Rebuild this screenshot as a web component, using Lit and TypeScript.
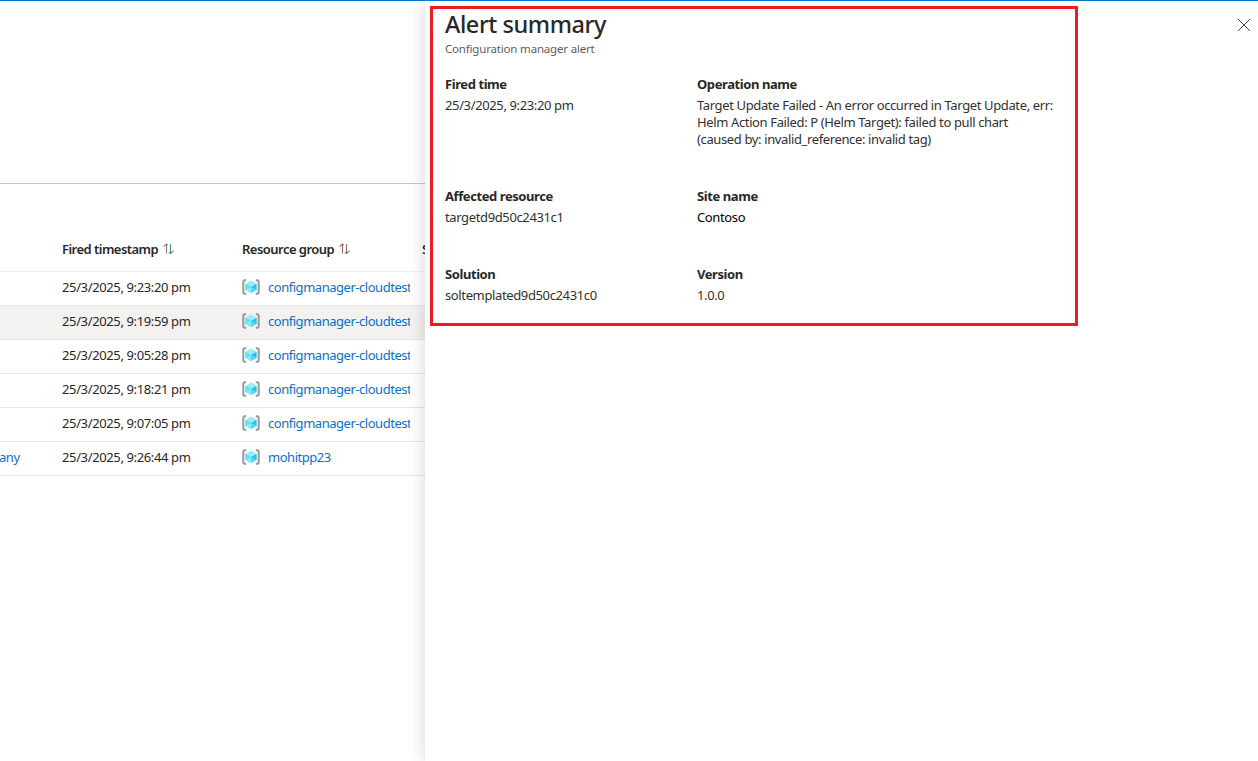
import { LitElement, html, css, svg } from "lit";
import { customElement, property } from "lit/decorators.js";
import { classMap } from "lit/directives/class-map.js";

interface AlertRow {
  name: string;
  fired: string;
  group: string;
  hovered?: boolean;
}

interface Field {
  label: string;
  lines: string[];
  dark?: boolean;
}

const rows: AlertRow[] = [
  { name: "", fired: "25/3/2025, 9:23:20 pm", group: "configmanager-cloudtest" },
  { name: "", fired: "25/3/2025, 9:19:59 pm", group: "configmanager-cloudtest", hovered: true },
  { name: "", fired: "25/3/2025, 9:05:28 pm", group: "configmanager-cloudtest" },
  { name: "", fired: "25/3/2025, 9:18:21 pm", group: "configmanager-cloudtest" },
  { name: "", fired: "25/3/2025, 9:07:05 pm", group: "configmanager-cloudtest" },
  { name: "any", fired: "25/3/2025, 9:26:44 pm", group: "mohitpp23" },
];

const fields: Field[] = [
  { label: "Fired time", lines: ["25/3/2025, 9:23:20 pm"] },
  {
    label: "Operation name",
    lines: [
      "Target Update Failed - An error occurred in Target Update, err:",
      "Helm Action Failed: P (Helm Target): failed to pull chart",
      "(caused by: invalid_reference: invalid tag)",
    ],
  },
  { label: "Affected resource", lines: ["targetd9d50c2431c1"] },
  { label: "Site name", lines: ["Contoso"], dark: true },
  { label: "Solution", lines: ["soltemplated9d50c2431c0"] },
  { label: "Version", lines: ["1.0.0"] },
];

const groupIcon = html`<svg class="cube" width="18" height="16" viewBox="0 0 18 16">
  ${svg`
    <path d="M4.2 1.2H2.8Q1.3 1.2 1.3 2.7V13.3Q1.3 14.8 2.8 14.8H4.2" fill="none" stroke="#999" stroke-width="2"/>
    <path d="M13.8 1.2H15.2Q16.7 1.2 16.7 2.7V13.3Q16.7 14.8 15.2 14.8H13.8" fill="none" stroke="#999" stroke-width="2"/>
    <path d="M9 1.8L14.5 4.9V11L9 14.1L3.5 11V4.9Z" fill="#50e6ff"/>
    <path d="M9 1.8L14.5 4.9L9 8L3.5 4.9Z" fill="#9cebff"/>
    <path d="M14.5 4.9V11L9 8Z" fill="#32bedd"/>
    <path d="M9 8L14.5 11L9 14.1Z" fill="#50dcf8"/>
    <path d="M3.5 4.9L9 8L3.5 11Z" fill="#50e6ff"/>
    <path d="M3.5 11L9 8V14.1Z" fill="#8ce9ff"/>
  `}
</svg>`;

@customElement("sort-icon")
class SortIcon extends LitElement {
  @property() up = "#605e5c";
  @property() down = "#605e5c";
  static styles = css`
    :host { display: block; width: 11px; height: 12px; }
    svg { display: block; }
  `;
  render() {
    return html`<svg width="11" height="12" viewBox="0 0 11 12" fill="none" stroke-width="1.1">
      <path d="M0.6 3.6L3.5 1L4.8 2.2M3.5 1V10.5" stroke=${this.up}></path>
      <path d="M7.5 1V10.5M6 9.2L7.5 10.5L10.4 7.9" stroke=${this.down}></path>
    </svg>`;
  }
}

@customElement("alerts-table")
class AlertsTable extends LitElement {
  static styles = css`
    :host {
      display: flex; flex-direction: column; flex: 0 0 425px; width: 425px; overflow: hidden;
      color: #292827; font: 13px/18px "Noto Sans", sans-serif;
    }
    .top { height: 182px; border-bottom: 1px solid #c8c6c4; }
    .row {
      display: grid; grid-template-columns: 62px 180px 180px 60px; align-items: center;
      box-sizing: border-box; height: 34px; padding-bottom: 3px; border-bottom: 1px solid #e6e5e4;
    }
    .head { height: 88px; padding: 42px 0 0; border-color: #f0efee; font-weight: 600; }
    .head .cell { display: flex; align-items: center; gap: 5px; white-space: nowrap; }
    .head .t { letter-spacing: -0.53px; }
    .hovered { background: #f3f2f1; }
    .fired { letter-spacing: -0.37px; white-space: nowrap; }
    .link { color: #0b70c8; white-space: nowrap; letter-spacing: -0.47px; }
    .name { margin-left: -1px; }
    .group { display: flex; align-items: center; gap: 8px; width: 168px; overflow: hidden; }
    .cube { flex: none; display: block; }
  `;
  render() {
    return html`
      <div class="top"></div>
      <div class="row head">
        <span></span>
        <span class="cell"><span class="t">Fired timestamp</span><sort-icon up="#967d72" down="#4d87ae"></sort-icon></span>
        <span class="cell"><span class="t">Resource group</span><sort-icon up="#a1685d" down="#8c7658"></sort-icon></span>
        <span class="cell">S</span>
      </div>
      ${rows.map(
        (r) => html`<div class=${classMap({ row: true, hovered: !!r.hovered })}>
          <span class="link name">${r.name}</span>
          <span class="fired">${r.fired}</span>
          <span class="group">${groupIcon}<span class="link">${r.group}</span></span>
        </div>`
      )}
    `;
  }
}

@customElement("alert-panel")
class AlertPanel extends LitElement {
  static styles = css`
    :host {
      display: flex; justify-content: space-between; align-items: flex-start; flex: 1;
      position: relative; background: #fff; box-shadow: 0 0 16px rgba(0, 0, 0, 0.17);
      clip-path: inset(0 0 0 -24px);
      font: 13px/17px "Noto Sans", sans-serif; color: #323130;
    }
    .summary {
      box-sizing: border-box; width: 648px; height: 320px; margin: 5px 0 0 5px;
      border: 3px solid #ed1c24; padding: 0 12px;
    }
    .title { margin: -1px 0 1px; font-size: 23.5px; line-height: 32px; font-weight: 550; color: #292827; letter-spacing: -0.45px; }
    .sub { font-size: 11.5px; line-height: 16px; color: #605e5c; letter-spacing: -0.18px; }
    .fields { display: grid; grid-template-columns: 252px 366px; grid-template-rows: 112px 78px 50px; padding-top: 18px; }
    .label { line-height: 18px; font-weight: 700; color: #292827; letter-spacing: -0.42px; margin-bottom: 4px; }
    .line { white-space: nowrap; letter-spacing: -0.37px; }
    .dark { color: #000; }
    .close { display: block; margin: 18px 8px 0 0; }
  `;
  render() {
    return html`
      <section class="summary">
        <h1 class="title">Alert summary</h1>
        <div class="sub">Configuration manager alert</div>
        <div class="fields">
          ${fields.map(
            (f) => html`<div>
              <div class="label">${f.label}</div>
              ${f.lines.map((l) => html`<div class=${classMap({ line: true, dark: !!f.dark })}>${l}</div>`)}
            </div>`
          )}
        </div>
      </section>
      <svg class="close" width="12" height="12" viewBox="0 0 12 12">
        <path d="M0 0L12 12M12 0L0 12" stroke="#444" stroke-width="1" />
      </svg>
    `;
  }
}

@customElement("app-root")
class AppRoot extends LitElement {
  static styles = css`
    :host {
      display: flex; box-sizing: border-box; width: 100%; height: 100vh; overflow: hidden;
      border-top: 1px solid #0078d4; background: #fff;
    }
  `;
  render() {
    return html`<alerts-table></alerts-table><alert-panel></alert-panel>`;
  }
}
